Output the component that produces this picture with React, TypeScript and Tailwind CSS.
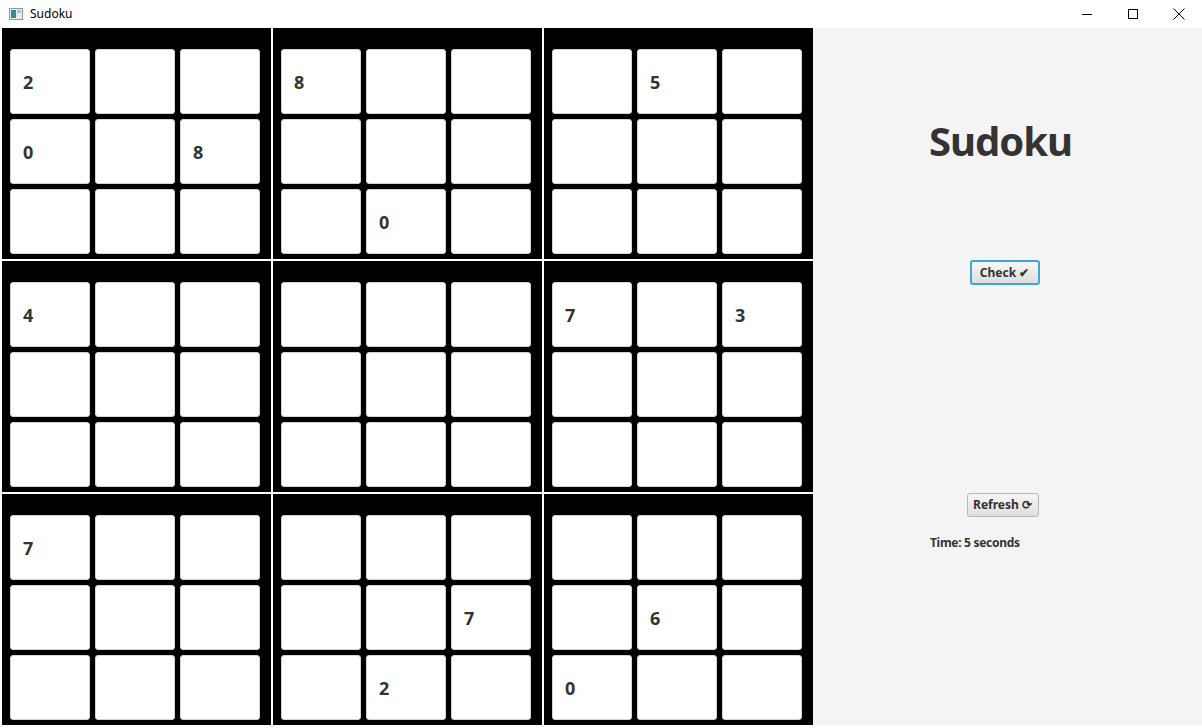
import React from "react";

type Cell = number | null;

const boxes: Cell[][] = [
  [2, null, null, 0, null, 8, null, null, null],
  [8, null, null, null, null, null, null, 0, null],
  [null, 5, null, null, null, null, null, null, null],
  [4, null, null, null, null, null, null, null, null],
  [null, null, null, null, null, null, null, null, null],
  [7, null, 3, null, null, null, null, null, null],
  [7, null, null, null, null, null, null, null, null],
  [null, null, null, null, null, 7, null, 2, null],
  [null, null, null, null, 6, null, 0, null, null],
];

const font = { fontFamily: '"Noto Sans", "Open Sans", sans-serif' };

const TitleBar = () => (
  <div className="flex h-[28px] items-center bg-white text-[12px] text-black" style={font}>
    <svg width="14" height="12" viewBox="0 0 14 12" className="ml-[9px]">
      <rect x="0.5" y="0.5" width="13" height="11" fill="#e8ecee" stroke="#8a9aa2" />
      <rect x="2" y="2" width="5" height="8" fill="#3c8a86" />
      <rect x="8" y="2" width="4" height="3" fill="#b8c4ca" />
    </svg>
    <span className="ml-[7px]">Sudoku</span>
    <div className="ml-auto flex h-full items-center">
      <div className="flex h-full w-[46px] items-center justify-center">
        <div className="h-px w-[10px] bg-black" />
      </div>
      <div className="flex h-full w-[46px] items-center justify-center">
        <div className="h-[10px] w-[10px] border border-black" />
      </div>
      <div className="flex h-full w-[46px] items-center justify-center">
        <svg width="12" height="12" viewBox="0 0 12 12">
          <path d="M0.5 0.5 L11.5 11.5 M11.5 0.5 L0.5 11.5" stroke="#000" strokeWidth="1" />
        </svg>
      </div>
    </div>
  </div>
);

const Box = ({ cells }: { cells: Cell[] }) => (
  <div className="bg-black pl-[8px] pt-[21px]">
    <div className="grid grid-cols-[repeat(3,80px)] grid-rows-[repeat(3,65px)] gap-[5px]">
      {cells.map((c, i) => (
        <div
          key={i}
          className="flex items-center rounded-[3px] border border-[#d4d4d4] bg-white pl-[12px] pt-[1px] text-[18px] font-bold text-[#333333]"
          style={font}
        >
          {c !== null ? c : ""}
        </div>
      ))}
    </div>
  </div>
);

const FxButton = ({ label, focused }: { label: string; focused?: boolean }) => (
  <button
    className={
      "flex items-center justify-center rounded-[3px] bg-gradient-to-b from-[#f7f7f7] to-[#dedede] text-[12px] font-bold text-[#333333] " +
      (focused
        ? "h-[25px] w-[70px] border-2 border-[#3ea6d4]"
        : "h-[24px] w-[72px] border border-[#b8b8b8]")
    }
    style={font}
  >
    {label}
  </button>
);

export default function App() {
  return (
    <div className="flex h-[728px] w-[1202px] flex-col overflow-hidden bg-white">
      <TitleBar />
      <div className="flex h-[697px] pl-[2px]">
        <div className="grid w-[811px] grid-cols-3 grid-rows-3 gap-[2px] bg-white">
          {boxes.map((b, i) => (
            <Box key={i} cells={b} />
          ))}
        </div>
        <div className="flex flex-1 flex-col items-center bg-[#f4f4f4] pr-[10px] pt-[93px]" style={font}>
          <h1 className="mr-[4px] h-[40px] text-[40px] font-bold leading-[40px] tracking-[-1px] text-[#333333]">Sudoku</h1>
          <div className="ml-[4px] mt-[99px]">
            <FxButton label="Check ✔" focused />
          </div>
          <div className="mt-[208px]">
            <FxButton label="Refresh ⟳" />
          </div>
          <div className="ml-[117px] mt-[18px] self-start text-[12px] font-bold leading-[16px] tracking-[-0.3px] text-[#333333]">
            Time: 5 seconds
          </div>
        </div>
      </div>
    </div>
  );
}
